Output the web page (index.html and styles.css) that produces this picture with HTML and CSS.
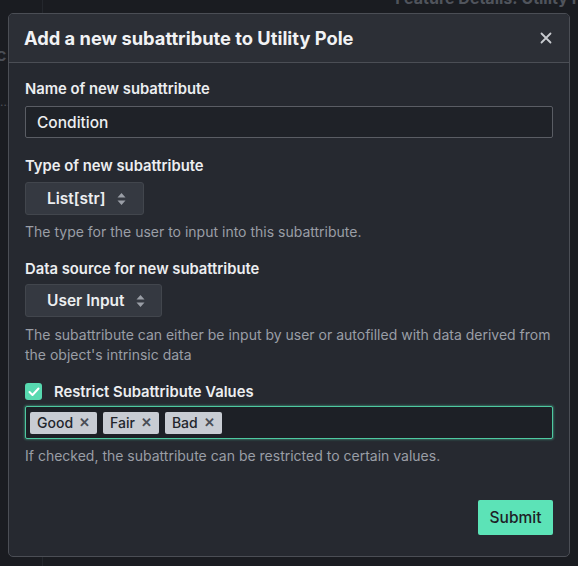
FILE: index.html
```html
<!DOCTYPE html>
<html>
<head>
<meta charset="utf-8">
<link rel="stylesheet" href="styles.css">
</head>
<body>
<div class="backdrop">
  <div class="bg-side"><span class="bg-c">c</span><span class="bg-dots">…</span></div>
  <div class="bg-main"><div class="bg-title">Feature Details: Utility P</div></div>
</div>
<div class="modal">
  <div class="modal-header">
    <h2 class="modal-title">Add a new subattribute to Utility Pole</h2>
    <button class="close-btn" aria-label="Close">
      <svg width="12" height="12" viewBox="0 0 12 12"><path d="M1.5 1.5 L10.5 10.5 M10.5 1.5 L1.5 10.5" stroke="#c9ccd1" stroke-width="1.8" stroke-linecap="round"/></svg>
    </button>
  </div>
  <div class="modal-body">
    <div class="field field-name">
      <label class="label">Name of new subattribute</label>
      <div class="text-input">Condition</div>
    </div>
    <div class="field field-type">
      <label class="label">Type of new subattribute</label>
      <div class="select select-type">List[str]
        <svg class="updown" width="9" height="14" viewBox="0 0 9 14"><path d="M4.5 1 L8.5 5.5 L0.5 5.5 Z M4.5 13 L8.5 8.5 L0.5 8.5 Z" fill="#9a9ea6"/></svg>
      </div>
      <p class="help">The type for the user to input into this subattribute.</p>
    </div>
    <div class="field field-source">
      <label class="label">Data source for new subattribute</label>
      <div class="select select-source">User Input
        <svg class="updown" width="9" height="14" viewBox="0 0 9 14"><path d="M4.5 1 L8.5 5.5 L0.5 5.5 Z M4.5 13 L8.5 8.5 L0.5 8.5 Z" fill="#9a9ea6"/></svg>
      </div>
      <p class="help">The subattribute can either be input by user or autofilled with data derived from the object's intrinsic data</p>
    </div>
    <div class="field field-check">
      <div class="check-row">
        <span class="checkbox">
          <svg width="12" height="10" viewBox="0 0 12 10"><path d="M1.5 5 L4.5 8 L10.5 1.5" stroke="#fff" stroke-width="2" fill="none" stroke-linecap="round" stroke-linejoin="round"/></svg>
        </span>
        <span class="check-label">Restrict Subattribute Values</span>
      </div>
      <div class="tag-input">
        <span class="tag">Good <span class="tag-x">✕</span></span>
        <span class="tag">Fair <span class="tag-x">✕</span></span>
        <span class="tag">Bad <span class="tag-x">✕</span></span>
      </div>
      <p class="help">If checked, the subattribute can be restricted to certain values.</p>
    </div>
    <div class="footer">
      <button class="submit">Submit</button>
    </div>
  </div>
</div>
</body>
</html>
```
FILE: styles.css
```css
html, body {
  margin: 0;
  padding: 0;
  width: 578px;
  height: 566px;
  overflow: hidden;
  background: #1a1c21;
  font-family: Inter, "Noto Sans", sans-serif;
}
.backdrop {
  position: absolute;
  inset: 0;
  display: flex;
}
.bg-side {
  width: 42px;
  border-right: 1px solid #24272d;
  position: relative;
}
.bg-c {
  position: absolute;
  left: -4px;
  top: 44px;
  color: #4a4e56;
  font-size: 18px;
  font-weight: 600;
}
.bg-dots {
  position: absolute;
  left: 0;
  top: 94px;
  color: #4a4e56;
  font-size: 12px;
}
.bg-main {
  flex: 1;
  position: relative;
}
.bg-title {
  position: absolute;
  right: -4px;
  top: -12px;
  color: #50545c;
  font-size: 16px;
  font-weight: 700;
}
.modal {
  position: absolute;
  left: 8px;
  top: 13px;
  width: 560px;
  height: 542px;
  background: #262930;
  border: 1px solid #4b4e55;
  border-radius: 5px;
  box-sizing: content-box;
  overflow: hidden;
  color: #e6e8ea;
}
.modal-header {
  height: 48px;
  background: #2c2f36;
  border-bottom: 1px solid #4b4e55;
  display: flex;
  align-items: center;
  justify-content: space-between;
  padding: 0 15px 0 15px;
}
.modal-title {
  margin: 0;
  font-size: 18.3px;
  font-weight: 700;
  color: #f1f2f4;
}
.close-btn {
  background: none;
  border: none;
  padding: 0;
  width: 16px;
  height: 16px;
  display: flex;
  align-items: center;
  justify-content: center;
}
.modal-body {
  padding: 17px 16px 0 16px;
  display: flex;
  flex-direction: column;
}
.field {
  display: flex;
  flex-direction: column;
  align-items: flex-start;
}
.field-type { margin-top: 19px; }
.field-source { margin-top: 18px; }
.field-check { margin-top: 18px; }
.label {
  font-size: 14.8px;
  font-weight: 600;
  color: #eceef0;
  margin-bottom: 7px;
  line-height: 18px;
}
.field-name .label { margin-bottom: 8px; }
.field-source .label { margin-bottom: 6px; }
.text-input {
  box-sizing: border-box;
  width: 528px;
  height: 32px;
  background: #1f2228;
  border: 1px solid #5a5d64;
  border-radius: 2px;
  padding: 0 11px;
  display: flex;
  align-items: center;
  font-size: 15.5px;
  font-weight: 500;
  color: #eceef0;
}
.select {
  box-sizing: border-box;
  height: 33px;
  background: #353941;
  border: 1px solid #42464d;
  border-radius: 3px;
  display: flex;
  align-items: center;
  font-size: 15.5px;
  font-weight: 600;
  color: #eceef0;
  gap: 11px;
}
.select-type {
  width: 119px;
  padding-left: 21px;
}
.select-source {
  width: 137px;
  padding-left: 21px;
}
.help {
  margin: 7px 0 0 0;
  font-size: 14px;
  line-height: 20px;
  color: #9a9ea6;
}
.field-source .help { margin-top: 8px; }
.check-row {
  display: flex;
  align-items: center;
  gap: 12px;
  margin-bottom: 6px;
  height: 17px;
}
.checkbox {
  width: 17px;
  height: 17px;
  border-radius: 3px;
  background: #57d9b0;
  display: flex;
  align-items: center;
  justify-content: center;
}
.check-label {
  font-size: 14.8px;
  font-weight: 600;
  color: #eceef0;
}
.tag-input {
  box-sizing: border-box;
  width: 528px;
  height: 33px;
  background: #1d2026;
  border: 1.5px solid #4ec9a0;
  box-shadow: 0 0 2px 1px rgba(87, 217, 176, 0.35);
  border-radius: 2px;
  display: flex;
  align-items: center;
  gap: 6px;
  padding-left: 4px;
}
.tag {
  background: #c8ccd3;
  color: #23262c;
  border-radius: 2px;
  height: 22px;
  padding: 0 7px 0 7px;
  display: flex;
  align-items: center;
  gap: 6px;
  font-size: 14px;
  font-weight: 500;
}
.tag-x {
  font-size: 12.5px;
  font-weight: 700;
  color: #4a4e56;
}
.footer {
  display: flex;
  justify-content: flex-end;
  margin-top: 34px;
}
.submit {
  background: #5ce3b7;
  border: none;
  border-radius: 2px;
  width: 75px;
  height: 35px;
  font-family: Inter, "Noto Sans", sans-serif;
  font-size: 15.5px;
  color: #1e2126;
  font-weight: 500;
}
```
